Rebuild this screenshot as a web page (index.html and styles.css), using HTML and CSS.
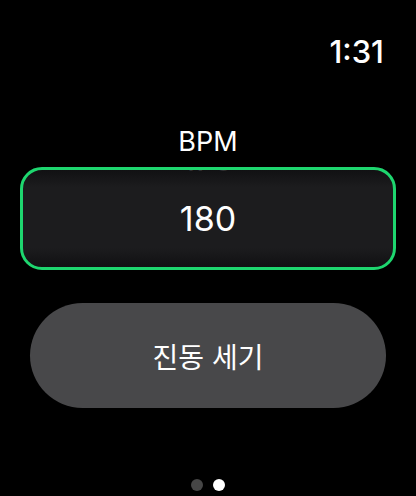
FILE: index.html
```html
<!DOCTYPE html>
<html lang="ko">
<head>
  <meta charset="UTF-8" />
  <title>BPM</title>
  <meta name="viewport" content="width=device-width, initial-scale=1.0" />
  <link rel="stylesheet" href="styles.css">
</head>
<body>

  <header class="status">
    <span class="time">1:31</span>
  </header>

  <main class="content">
    <div class="label">BPM</div>
    <div class="picker">
      <span class="peek">179</span>
      <span class="value">180</span>
    </div>
    <button class="pill">진동 세기</button>
  </main>

  <footer class="pager">
    <span class="dot"></span>
    <span class="dot active"></span>
  </footer>

</body>
</html>
```

FILE: styles.css
```css
body {
  margin: 0;
  width: 416px;
  height: 496px;
  background: #000;
  color: #fff;
  font-family: Inter, "Noto Sans CJK KR", sans-serif;
  display: flex;
  flex-direction: column;
  overflow: hidden;
}
.status {
  display: flex;
  justify-content: flex-end;
  padding: 34px 32px 0 0;
  height: 36px;
}
.time {
  font-size: 31px;
  line-height: 36px;
  font-weight: 500;
}
.content {
  display: flex;
  flex-direction: column;
  align-items: center;
  padding-top: 56px;
}
.label {
  font-size: 27px;
  line-height: 32px;
  height: 41px;
}
.picker {
  position: relative;
  box-sizing: border-box;
  width: 376px;
  height: 103px;
  border: 3px solid #1ed66f;
  border-radius: 22px;
  background: linear-gradient(#111113 0%, #1c1c1e 18%, #1c1c1e 80%, #111113 100%);
  display: flex;
  align-items: center;
  justify-content: center;
  overflow: hidden;
}
.peek {
  position: absolute;
  top: -31px;
  left: 0;
  right: 0;
  text-align: center;
  font-size: 33px;
  line-height: 40px;
  color: #2e2e30;
}
.value {
  font-size: 34px;
  line-height: 40px;
}
.pill {
  margin-top: 33px;
  width: 356px;
  height: 105px;
  border: none;
  border-radius: 53px;
  background: #48484a;
  color: #fff;
  font-family: "Noto Sans CJK KR", sans-serif;
  font-size: 28px;
}
.pager {
  margin-top: auto;
  display: flex;
  justify-content: center;
  gap: 10px;
  padding-bottom: 5px;
}
.dot {
  width: 12px;
  height: 12px;
  border-radius: 50%;
  background: #464646;
}
.dot.active {
  background: #fff;
}
```
